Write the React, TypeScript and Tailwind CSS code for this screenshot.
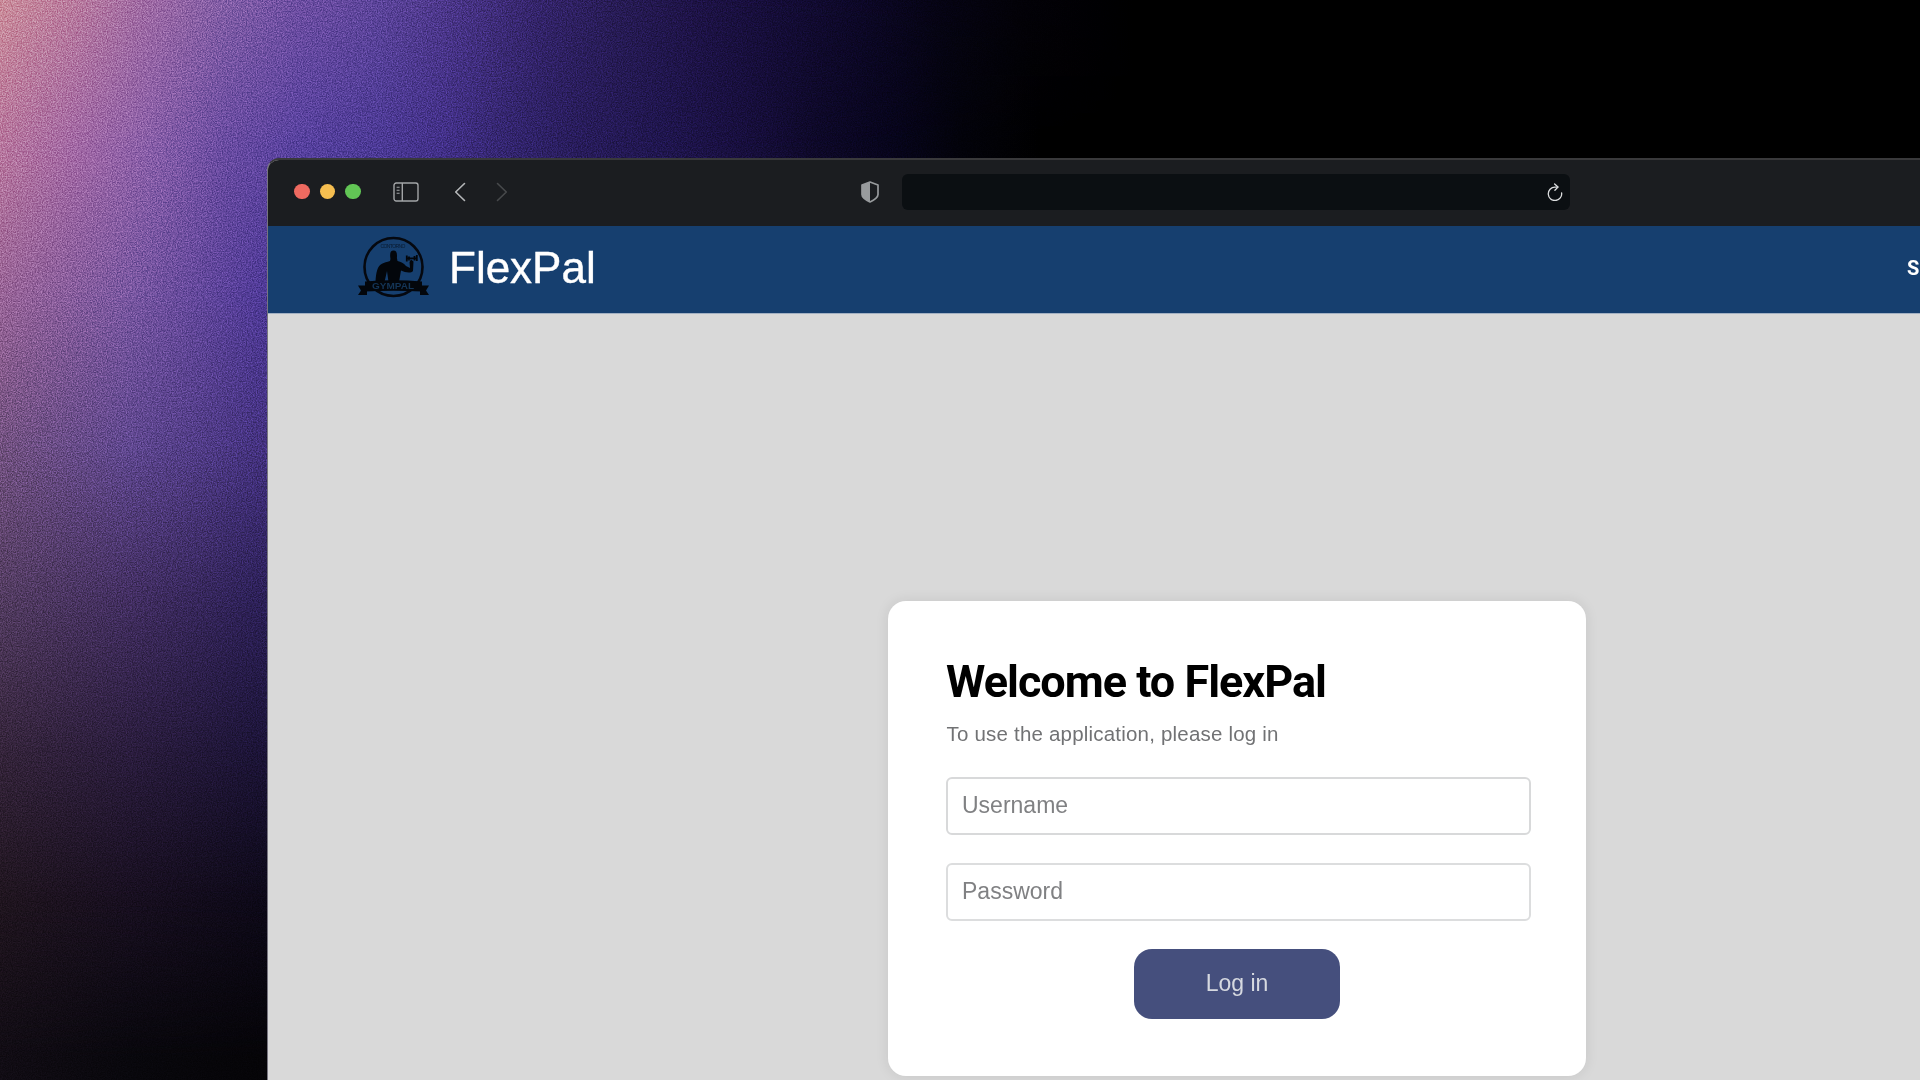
import React from "react";

/* Colour bands stacked top to bottom; each fades in over the one before it. */
function Wallpaper() {
  return (
    <div className="absolute inset-0 overflow-hidden bg-black">
      <div className="absolute inset-0 bg-[linear-gradient(90deg,#cc8f9c_0px,#bb7ea0_75px,#a06ca6_150px,#8560a8_225px,#7050a4_300px,#5e469c_380px,#4a3588_460px,#35256c_540px,#281c56_620px,#1e1347_700px,#150d38_780px,#0d0828_860px,#060414_940px,#030208_1020px,#000000_1150px)]" />
      <div className="absolute inset-0 bg-[linear-gradient(90deg,#b8789f_0px,#a36aa6_75px,#8a60aa_150px,#6a4ca2_225px,#5842a0_300px,#4c3a96_380px,#43318a_440px,#33256f_510px,#281c5c_580px,#201650_660px,#180f3f_740px,#0d0828_820px,#06041a_900px,#02020a_960px,#000000_1040px)] [mask-image:linear-gradient(180deg,transparent_0px,black_150px)]" />
      <div className="absolute inset-0 bg-[linear-gradient(90deg,#9a6699_0px,#7a58a2_130px,#4f3a98_266px,#30246a_520px,#000000_1000px)] [mask-image:linear-gradient(180deg,transparent_160px,black_300px)]" />
      <div className="absolute inset-0 bg-[linear-gradient(90deg,#745382_0px,#604890_130px,#443280_266px)] [mask-image:linear-gradient(180deg,transparent_300px,black_450px)]" />
      <div className="absolute inset-0 bg-[linear-gradient(90deg,#543d62_0px,#432f62_130px,#2c2058_266px)] [mask-image:linear-gradient(180deg,transparent_450px,black_600px)]" />
      <div className="absolute inset-0 bg-[linear-gradient(90deg,#36253c_0px,#2b1d3e_130px,#1c1438_266px)] [mask-image:linear-gradient(180deg,transparent_600px,black_750px)]" />
      <div className="absolute inset-0 bg-[linear-gradient(90deg,#20151f_0px,#180f20_130px,#0d0918_266px)] [mask-image:linear-gradient(180deg,transparent_750px,black_900px)]" />
      <div className="absolute inset-0 bg-[linear-gradient(90deg,#110c14_0px,#08070c_130px,#050407_266px)] [mask-image:linear-gradient(180deg,transparent_900px,black_1060px)]" />
      <svg className="absolute inset-0 h-full w-full opacity-30 mix-blend-overlay" aria-hidden="true">
        <filter id="grain" x="0" y="0" width="100%" height="100%" colorInterpolationFilters="sRGB">
          <feTurbulence type="fractalNoise" baseFrequency="0.8" numOctaves="2" seed="4" />
          <feColorMatrix type="matrix" values="2 0 0 0 -0.54  2 0 0 0 -0.54  2 0 0 0 -0.54  0 0 0 0 1" />
        </filter>
        <rect width="100%" height="100%" filter="url(#grain)" />
      </svg>
    </div>
  );
}

function SidebarIcon() {
  return (
    <svg className="h-[20px] w-[26px]" viewBox="0 0 26 20" fill="none" stroke="#a3a5a7" strokeWidth="1.4">
      <rect x="1" y="1" width="24" height="18" rx="2.2" />
      <path d="M9.3 1v18" />
      <path d="M3.6 5.2h3M3.6 8.2h3M3.6 11.2h3" strokeWidth="1.1" />
    </svg>
  );
}

function Chevron({ forward = false }: { forward?: boolean }) {
  return (
    <svg className="h-[20px] w-[12px]" viewBox="0 0 12 20" fill="none" stroke={forward ? "#47494b" : "#b4b6b8"} strokeWidth="1.6" strokeLinecap="round" strokeLinejoin="round">
      <path d={forward ? "M1.5 1.5L10.3 10L1.5 18.5" : "M10.5 1.5L1.7 10L10.5 18.5"} />
    </svg>
  );
}

function ShieldIcon() {
  return (
    <svg className="h-[22px] w-[18px]" viewBox="0 0 18 22">
      <path d="M9 1L17 4V13.5C17 16.5 13.5 18.8 9 21C4.500 18.800 1 16.500 1 13.500V4Z" fill="none" stroke="#989b9d" strokeWidth="1.7" strokeLinejoin="round" />
      <path d="M9 1V21C4.500 18.800 1 16.500 1 13.500V4Z" fill="#989b9d" />
    </svg>
  );
}

function ReloadIcon() {
  return (
    <svg className="h-[18px] w-[16px]" viewBox="0 0 16 18" fill="none" stroke="#dcdedf" strokeWidth="1.3" strokeLinecap="round" strokeLinejoin="round">
      <path d="M14.600 9.800A6.700 6.700 0 1 1 7.900 4.100H10.800" />
      <path d="M7.600 1L11 4.100L7.900 7.300" />
    </svg>
  );
}

function Logo() {
  return (
    <svg className="mb-[3px] h-[66px] w-[74px]" viewBox="0 0 74 66">
      <circle cx="37.500" cy="32" r="29" fill="none" stroke="#05080f" strokeWidth="2.600" />
      <text x="37" y="13" textAnchor="middle" fontSize="5" textLength="25" fill="#0a1b30" className="font-['Liberation_Sans']">CONTORNO</text>
      <path d="M34.500 24C33.500 18 34.500 15.500 37.500 15.500C40.500 15.500 41.400 18 40.900 23L41.500 26C45 27 47.500 28 50 31L54 33L53.500 27L55 24.500L57.500 26.500L57 36C55 38.500 49 37.500 45 35.500L43 47H32.500L31 36L28.500 47H19.500C20 37 21.500 31 26 28.800C28 27.700 31 27 34 26Z" fill="#03060b" />
      <path d="M50 23.500L61 23.200M50.800 20.500V26.500M53 21.500V25.500M58.500 21V25.500M60.800 20V26" stroke="#03060b" strokeWidth="1.800" fill="none" />
      <path d="M2 50.500H11V60H2L5 55.500ZM73 50.500H64V60H73L70 55.500Z" fill="#03060b" />
      <path d="M9 46.500Q37.500 44 66 46.500V56.500Q37.500 55 9 56.500Z" fill="#03060b" />
      <text x="37" y="54" textAnchor="middle" fontSize="8.500" textLength="42" lengthAdjust="spacingAndGlyphs" fill="#143557" className="font-['Liberation_Sans'] font-bold">GYMPAL</text>
    </svg>
  );
}

function Toolbar() {
  return (
    <div className="flex h-[66px] shrink-0 items-center bg-[#1b1d20] pb-[3px]">
      <div className="ml-[26px] flex gap-[10px]">
        <span className="size-[15.500px] rounded-full bg-[#ee6a60]" />
        <span className="size-[15.500px] rounded-full bg-[#f6be50]" />
        <span className="size-[15.500px] rounded-full bg-[#62c655]" />
      </div>
      <div className="ml-[32px] flex items-center">
        <SidebarIcon />
        <div className="ml-[35px] flex gap-[30px]">
          <Chevron />
          <Chevron forward />
        </div>
      </div>
      <div className="ml-[353px]">
        <ShieldIcon />
      </div>
      <div className="ml-[23px] flex h-[36px] w-[668px] items-center justify-end rounded-[6px] bg-[#0b0f12] pr-[7px] pt-[1px]">
        <ReloadIcon />
      </div>
    </div>
  );
}

function Header() {
  return (
    <header className="flex h-[87px] shrink-0 items-center bg-[#163f6f] pl-[88px] text-white">
      <Logo />
      <span className="ml-[19px] pb-[3px] font-['Liberation_Sans',sans-serif] text-[44px] leading-[50px] [-webkit-text-stroke:0.4px_white]">FlexPal</span>
      <span className="ml-auto w-[13px] overflow-hidden pb-[4px] font-[Roboto,sans-serif] text-[20px] leading-6 font-bold">S</span>
    </header>
  );
}

function LoginCard() {
  return (
    <form className="mt-[287px] ml-[620px] h-[475px] w-[698px] rounded-[18px] bg-white pt-[54px] pr-[55px] pl-[58px] shadow-[0_0_14px_rgba(0,0,0,0.09)]">
      <h1 className="font-[Roboto,sans-serif] text-[45px] leading-[54px] font-bold tracking-[-1px] whitespace-nowrap text-black">Welcome to FlexPal</h1>
      <p className="mt-[12px] ml-[0.500px] font-['Liberation_Sans',sans-serif] text-[20.500px] leading-[26px] tracking-[0.200px] text-[#717274]">To use the application, please log in</p>
      <input className="mt-[30px] block h-[58px] w-full rounded-[6px] border-2 border-[#d8d9da] px-[14px] pb-[2px] font-['Liberation_Sans',sans-serif] text-[23px] placeholder:text-[#808183]" placeholder="Username" />
      <input type="password" className="mt-[28px] block h-[58px] w-full rounded-[6px] border-2 border-[#dcddde] px-[14px] pb-[2px] font-['Liberation_Sans',sans-serif] text-[23px] placeholder:text-[#808183]" placeholder="Password" />
      <button type="button" className="ml-[188px] mt-[28px] block h-[70px] w-[206px] rounded-[18px] bg-[#454f7d] pb-[1px] font-['Liberation_Sans',sans-serif] text-[23px] text-[#d6d9e0]">Log in</button>
    </form>
  );
}

export default function App() {
  return (
    <div className="relative h-[1080px] w-[1920px] overflow-hidden bg-black pt-[158px] pl-[267px]">
      <Wallpaper />
      <main className="relative flex h-[922px] flex-col overflow-hidden rounded-tl-[12px] border-t-2 border-l border-t-[#39393b] border-l-[#77757f] bg-[#d9d9d9]">
        <Toolbar />
        <Header />
        <div className="h-px shrink-0 bg-[#a3b1c3]" />
        <LoginCard />
      </main>
    </div>
  );
}
